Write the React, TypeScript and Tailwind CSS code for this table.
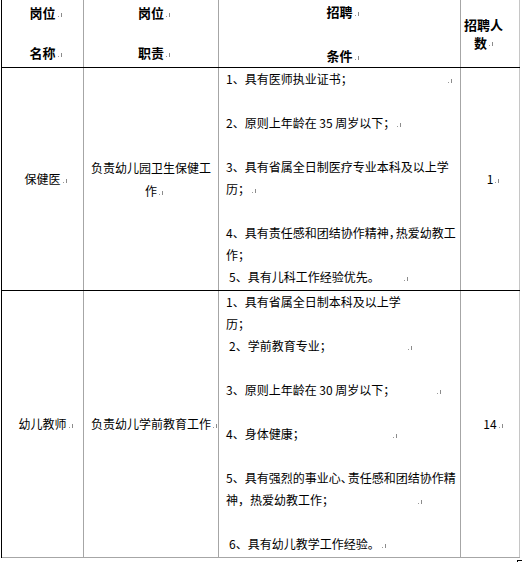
import type { ReactNode } from 'react'

// 82 | 135 | 242 | 59 — right edge of each cell carries the column rule
const COLS = 'grid grid-cols-[82px_135px_242px_59px]'
const RULE = 'border-r border-[#a6a6a6]'
const EDGE = 'border-r border-[#c6c6c6]'

// Word paragraph mark; zero width so it never shifts centred text
function Mark({ className = 'ml-[2px]' }: { className?: string }) {
  return (
    <span className="inline-block w-0 whitespace-nowrap align-baseline">
      <svg width="5" height="5" viewBox="0 0 5 5" className={`inline-block ${className}`}>
        <rect x="0" y="4" width="1" height="1" fill="#9a9a9a" />
        <path d="M3.5 1V5" fill="none" stroke="#8c8c8c" strokeWidth="1" />
      </svg>
    </span>
  )
}

type Line = { text?: ReactNode; indent?: boolean; mark?: string }

const DOCTOR: Line[] = [
  { text: '1、具有医师执业证书；', mark: 'ml-[95px]' },
  {},
  { text: '2、原则上年龄在 35 周岁以下；', mark: 'ml-[2px]' },
  {},
  { text: '3、具有省属全日制医疗专业本科及以上学' },
  { text: '历；', mark: 'ml-[2px]' },
  {},
  { text: <>4、具有责任感和团结协作精神<span className="tracking-[-5px]">，</span>热爱幼教工</> },
  { text: '作；' },
  { text: '5、具有儿科工作经验优先。', indent: true, mark: 'ml-[24px]' },
]

const TEACHER: Line[] = [
  { text: '1、具有省属全日制本科及以上学' },
  { text: '历；' },
  { text: '2、学前教育专业；', indent: true, mark: 'ml-[76px]' },
  {},
  { text: '3、原则上年龄在 30 周岁以下；', mark: 'ml-[42px]' },
  {},
  { text: '4、身体健康；', mark: 'ml-[88px]' },
  {},
  { text: <>5、具有强烈的事业心<span className="tracking-[-5px]">、</span>责任感和团结协作精</> },
  { text: '神，热爱幼教工作；', mark: 'ml-[84px]' },
  {},
  { text: '6、具有幼儿教学工作经验。', indent: true, mark: 'ml-[2px]' },
]

function Conditions({ lines }: { lines: Line[] }) {
  return (
    <div className={`flex flex-col pl-[7px] ${RULE}`}>
      {lines.map((l, i) => (
        <div key={i} className={`h-[22px] leading-[22px] whitespace-nowrap ${l.indent ? 'pl-[3px]' : ''}`}>
          {l.text}
          {l.mark && <Mark className={l.mark} />}
        </div>
      ))}
    </div>
  )
}

export default function App() {
  return (
    <div className="w-[522px] h-[562px] overflow-hidden bg-white text-black text-[12px] font-['Noto_Sans_CJK_SC','Noto_Sans_CJK_JP',sans-serif]">
      <div className="ml-[1px] w-[519px] border-l border-black">
        {/* header */}
        <div className={`${COLS} h-[68px] border-b border-black font-bold text-[13px]`}>
          <div className={`flex flex-col items-center pt-[3px] leading-[20px] ${RULE}`}>
            <div>岗位<Mark /></div>
            <div className="h-[20px]" />
            <div>名称<Mark /></div>
          </div>
          <div className={`flex flex-col items-center pt-[3px] leading-[20px] ${RULE}`}>
            <div>岗位<Mark /></div>
            <div className="h-[20px]" />
            <div>职责<Mark /></div>
          </div>
          <div className={`flex flex-col items-center pt-[1px] leading-[22px] ${RULE}`}>
            <div>招聘<Mark /></div>
            <div className="h-[22px]" />
            <div>条件<Mark /></div>
          </div>
          <div className={`flex flex-col justify-center leading-[18px] ${EDGE}`}>
            <div className="pl-[3px]">招聘人</div>
            <div className="pl-[13px]">数<Mark /></div>
          </div>
        </div>

        {/* 保健医 */}
        <div className={`${COLS} h-[223px] border-b border-black`}>
          <div className={`flex items-center justify-center ${RULE}`}>
            <span>保健医<Mark /></span>
          </div>
          <div className={`flex flex-col items-center justify-center leading-[23px] ${RULE}`}>
            <div>负责幼儿园卫生保健工</div>
            <div>作<Mark /></div>
          </div>
          <Conditions lines={DOCTOR} />
          <div className={`flex items-center justify-center ${EDGE}`}>
            <span>1<Mark /></span>
          </div>
        </div>

        {/* 幼儿教师 */}
        <div className={`${COLS} h-[267px] border-b border-[#a6a6a6]`}>
          <div className={`flex items-center justify-center ${RULE}`}>
            <span>幼儿教师<Mark /></span>
          </div>
          <div className={`flex items-center justify-center ${RULE}`}>
            <span>负责幼儿学前教育工作<Mark /></span>
          </div>
          <Conditions lines={TEACHER} />
          <div className={`flex items-center justify-center ${EDGE}`}>
            <span>14<Mark /></span>
          </div>
        </div>
      </div>

      {/* table resize handle */}
      <div className="flex justify-end">
        <div className="mt-[2px] h-[4px] w-[5px] border-l border-t border-black" />
      </div>
    </div>
  )
}
